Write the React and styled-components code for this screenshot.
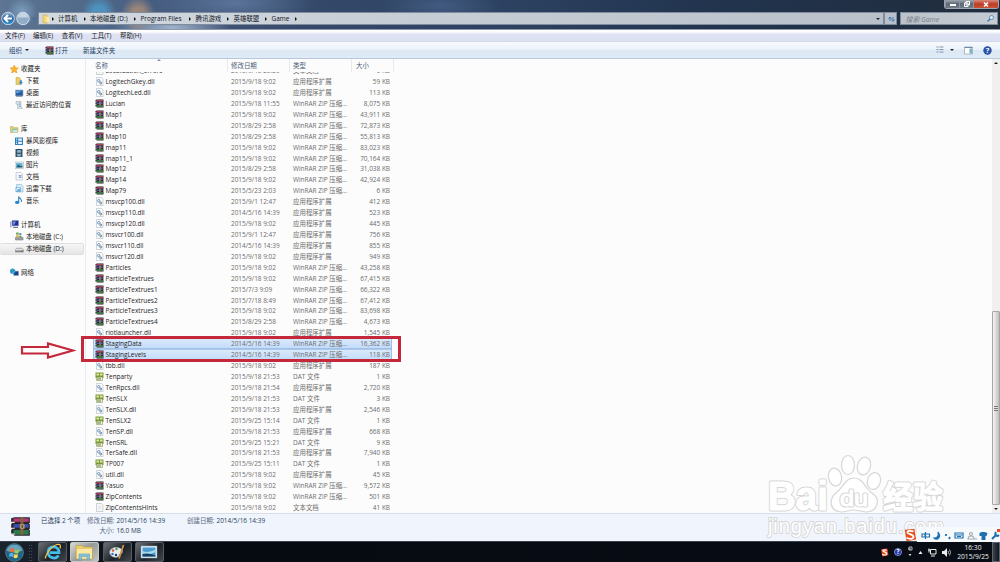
import React from "react"
import styled, { createGlobalStyle, css } from "styled-components"

const GlobalStyle = createGlobalStyle`
  * {
    box-sizing: border-box;
  }
  body {
    margin: 0;
    overflow: hidden;
    font-family: "Open Sans", "Noto Sans CJK SC", sans-serif;
    font-size: 6.45px;
    color: #222;
  }
  svg {
    display: block;
    flex: none;
  }
`

const Screen = styled.div`
  position: relative;
  width: 1000px;
  height: 562px;
  display: flex;
  flex-direction: column;
  overflow: hidden;
  background: #fcfcfc;
  white-space: nowrap;
`

const TitleBar = styled.header`
  position: relative;
  height: 30px;
  flex: none;
  display: flex;
  align-items: flex-end;
  padding: 0 0 4px 1px;
  border-bottom: 1px solid #8d99a8;
  background:
    radial-gradient(ellipse 15px 15px at 22px 12px, #84a9cccc, transparent),
    radial-gradient(ellipse 17px 16px at 99px 12px, #4d9ccbcc 35%, transparent),
    radial-gradient(ellipse 17px 18px at 138px 14px, #ae8d78cc 35%, transparent),
    radial-gradient(ellipse 60px 14px at 172px 28px, #b9cbe0cc, transparent),
    radial-gradient(ellipse 80px 22px at 235px 3px, #6680a8bb, transparent),
    radial-gradient(ellipse 60px 18px at 440px 6px, #4c6690aa, transparent),
    linear-gradient(90deg, #5e7693 0, #4b6486 12%, #3d5275 22%, #344969 32%, #2d4262 50%, #22344f 70%, #202c3c 100%);
`

const AddressBox = styled.div`
  height: 13px;
  width: ${p => p.$width};
  margin-left: ${p => p.$gap || "0"};
  display: flex;
  align-items: center;
  padding: 0 3px;
  border: 1px solid #7f8c9e;
  background: linear-gradient(90deg, ${p => p.$from}, ${p => p.$to});
  color: #0e131c;
`

const Crumb = styled.span`
  width: ${p => p.$width}px;
  display: flex;
  align-items: center;
  justify-content: space-between;
  padding-right: 4.5px;
`

const Triangle = styled.i`
  width: 0;
  height: 0;
  flex: none;
  border: 2px solid transparent;
  ${p =>
    p.$down
      ? css`border-top: 2.5px solid #222; border-bottom: 0;`
      : css`border-left: 2.5px solid #111; border-right: 0;`}
`

const RootTriangle = styled(Triangle)`
  margin: 0 4px 0 1px;
`

const Spacer = styled.span`
  flex: 1;
`

const SearchHint = styled.em`
  flex: 1;
  padding-left: 1.5px;
  font-size: 6.9px;
  color: #747b87;
`

const WindowButtons = styled.div`
  position: absolute;
  top: 0;
  right: 1px;
  display: flex;
  height: 9px;
  border: 1px solid #9ba4b1;
  border-top: 0;
  border-radius: 0 0 3px 3px;
  overflow: hidden;
`

const WindowButton = styled.span`
  width: ${p => (p.$close ? 25 : 14)}px;
  display: flex;
  align-items: center;
  justify-content: center;
  border-left: 1px solid #8b94a0;
  background: ${p =>
    p.$close
      ? "linear-gradient(#d98b7c, #bd3c25 50%, #cb5236)"
      : "linear-gradient(#a2a8b1, #5b6572 50%, #737e8c)"};
`

const MenuBar = styled.nav`
  height: 12px;
  flex: none;
  display: flex;
  align-items: center;
  padding-left: 5px;
  border-bottom: 1px solid #d3d9e6;
  background: linear-gradient(#ffffff 1px, #f1f3fa 3px, #dfe3f4 4px, #dbe0f2);
  color: #1b1b1b;
`

const MenuItem = styled.span`
  width: ${p => p.$width || 28.8}px;
`

const ToolBar = styled.div`
  height: 17px;
  flex: none;
  display: flex;
  align-items: center;
  padding: 0 8px 0 9px;
  border-bottom: 1px solid #b7c8dc;
  background: linear-gradient(#f8fbfe, #e9f1fa 48%, #dce7f4 52%, #dfebf7);
  color: #28425f;
`

const ToolItem = styled.span`
  display: flex;
  align-items: center;
  gap: ${p => p.$gap || 2}px;
  width: ${p => p.$width}px;
`

const Content = styled.div`
  flex: 1;
  min-height: 0;
  display: flex;
`

const Sidebar = styled.aside`
  width: 86px;
  flex: none;
  padding-top: 4px;
  border-right: 1px solid #e4edf6;
`

const Group = styled.div`
  margin-bottom: 12px;
`

const TreeItem = styled.div`
  height: 11.97px;
  display: flex;
  align-items: center;
  gap: 2.5px;
  width: 84px;
  padding-left: ${p => (p.$root ? 10 : 15)}px;
  border: 1px solid transparent;
  border-left: 0;
  color: #161616;
  ${p =>
    p.$active &&
    css`
      border-color: #dedede;
      border-radius: 2px;
      background: linear-gradient(#f6f6f6, #e5e5e5);
    `}
`

const FileList = styled.main`
  flex: 1;
  display: flex;
  flex-direction: column;
  padding-left: 7px;
`

const columns = "134.5px 62px 62.5px 42px"

const HeaderRow = styled.div`
  position: relative;
  height: 13px;
  flex: none;
  width: 301px;
  display: grid;
  grid-template-columns: ${columns};
`

const HeaderCell = styled.div`
  display: flex;
  align-items: center;
  padding-left: ${p => p.$pad || 2}px;
  border-right: 1px solid #e3ebf4;
  color: #4c607a;
`

const SortMark = styled.i`
  position: absolute;
  top: 0;
  left: 64px;
  border: 2px solid transparent;
  border-top: 0;
  border-bottom: 2px solid #7c93ab;
`

const Rows = styled.div`
  flex: 1;
  min-height: 0;
  display: flex;
  flex-direction: column;
  justify-content: flex-end;
  overflow: hidden;
`

const FileRow = styled.div`
  height: 10.925px;
  flex: none;
  width: 299px;
  display: grid;
  grid-template-columns: ${columns};
  align-items: center;
  color: #6d6d6d;
  ${p =>
    p.$selected &&
    css`
      border-radius: 1px;
      background: linear-gradient(#dcebfc, #c1dbfb);
      box-shadow: inset 0 0 0 0.6px #7da6d8;
    `}
`

const FileName = styled.div`
  display: flex;
  align-items: center;
  gap: 1.5px;
  padding-left: 2px;
  color: #1c1c1c;
`

const Cell = styled.div`
  padding-left: 3.5px;
`

const SizeCell = styled.div`
  width: 38px;
  text-align: right;
`

const ScrollBar = styled.div`
  width: 8px;
  flex: none;
  display: flex;
  flex-direction: column;
  align-items: center;
  justify-content: space-between;
  background: #f0f0f0;
`

const ScrollArrow = styled.span`
  height: 8px;
  display: flex;
  align-items: center;
  transform: ${p => (p.$up ? "rotate(180deg)" : "none")};
`

const Thumb = styled.div`
  width: 8px;
  height: 194px;
  margin-top: auto;
  display: flex;
  align-items: center;
  justify-content: center;
  border: 1px solid #a5a5a5;
  border-radius: 1px;
  background: linear-gradient(90deg, #f5f5f5, #dedede 45%, #bdbdbd);
`

const Grip = styled.i`
  width: 4px;
  height: 5px;
  background: repeating-linear-gradient(#777 0 1px, #e0e0e0 1px 2px);
`

const Details = styled.footer`
  height: 28px;
  flex: none;
  display: flex;
  padding: 2px 0 0 10px;
  border-top: 1px solid #d5dfeb;
  background: #f0f4fc;
  color: #2a3f5a;
  line-height: 10px;
`

const DetailColumn = styled.div`
  width: ${p => p.$width}px;
`

const DetailLine = styled.div`
  display: grid;
  grid-template-columns: 27px auto;
  gap: 2.5px;
`

const Label = styled.span`
  text-align: right;
  color: #59697f;
`

const TaskBar = styled.div`
  height: 21px;
  flex: none;
  display: flex;
  align-items: stretch;
  border-top: 1px solid #3a434d;
  background: linear-gradient(90deg, #1b232c, #060a11 17%, #080d15);
  color: #f2f2f2;
`

const StartButton = styled.div`
  width: 28px;
  display: flex;
  align-items: center;
  justify-content: center;
`

const Dots = styled.i`
  width: 5px;
  height: 17px;
  margin: 2px 5px 0 0;
  background: radial-gradient(circle, #56606b 0.6px, transparent 0.8px) 0 0 / 2.5px 3px;
`

const TaskButton = styled.div`
  width: 29px;
  margin-right: 3.3px;
  display: flex;
  align-items: center;
  justify-content: center;
  border: 1px solid ${p => (p.$active ? "#c4c7c2" : "#555b61")};
  border-radius: 2px;
  background: ${p =>
    p.$active
      ? "linear-gradient(135deg, #d9dad4, #96999a 50%, #c4c5bf)"
      : "linear-gradient(135deg, #6b7075, #1d2228 55%, #41474e)"};
`

const Tray = styled.div`
  display: flex;
  align-items: center;
  gap: 5px;
  padding-right: 2px;
`

const Clock = styled.div`
  width: 34px;
  text-align: center;
  line-height: 9px;
  font-size: 6.7px;
`

const ShowDesktop = styled.div`
  width: 8px;
  border: 1px solid #5c646d;
  background: linear-gradient(90deg, #39414a, #12171e);
`

const RedBox = styled.div`
  position: absolute;
  left: 81px;
  top: 336px;
  width: 320px;
  height: 26px;
  border: 3px solid #c4283a;
`

const Arrow = styled.svg`
  position: absolute;
  left: 20px;
  top: 341px;
`

const Watermark = styled.svg`
  position: absolute;
  left: 750px;
  top: 450px;
`

const ImeBar = styled.div`
  position: absolute;
  left: 903px;
  top: 527px;
  width: 97px;
  height: 15px;
  display: flex;
  align-items: center;
  gap: 4px;
  background: linear-gradient(90deg, transparent 14px, #f7fafd 14px);
`

function RarIcon({ size = 9 }) {
  return (
    <svg width={size} height={size} viewBox="0 0 18 18">
      <path d="M1 2l3-1h13v5l-1 .5 1 .5v4l-1 .5 1 .5v5H4l-3-2v-3l1-1-1-1V7l1-1-1-1z" fill="#29252c" />
      <path d="M3 2h13v3H3z" fill="#b03a72" />
      <path d="M3 7h13v3H3z" fill="#3c4fae" />
      <path d="M3 12h13v4H3z" fill="#2a7a4c" />
      <path d="M1 5.5h3M1 10.5h3M1 15.5h3" stroke="#e5e2dc" />
      <path d="M9 1h2.5v15H9z" fill="#84623b" />
      <path d="M8.5 7h4v4h-4z" fill="#b09a66" />
      <path d="M10 8h1v2h-1z" fill="#3c3022" />
    </svg>
  )
}

function DllIcon() {
  return (
    <svg width="9" height="9" viewBox="0 0 18 18">
      <path d="M3 1h10l3 3v13H3z" fill="#fbfdff" stroke="#a3adb6" />
      <circle cx="7.5" cy="7.5" r="2.5" fill="none" stroke="#6b91b3" strokeWidth="2" />
      <circle cx="11.5" cy="12" r="2" fill="none" stroke="#6287a9" strokeWidth="2" />
    </svg>
  )
}

function DatIcon() {
  return (
    <svg width="9" height="9" viewBox="0 0 18 18">
      <path d="M1 1h16v11H1z" fill="#7a9c35" />
      <path d="M3 3h5v4H3zM10 3h5v4h-5z" fill="#dce7a9" />
      <path d="M3 10h12v7H3z" fill="#edf0dc" stroke="#76863f" />
      <path d="M6 11v5M10 11v5" stroke="#68823d" strokeWidth="2" />
    </svg>
  )
}

function TextIcon() {
  return (
    <svg width="9" height="9" viewBox="0 0 18 18">
      <path d="M3 1h10l3 3v13H3z" fill="#f7f8f8" stroke="#a3a9af" />
      <path d="M6 6h7M6 9h7M6 12h7" stroke="#cbd1d7" />
    </svg>
  )
}

const fileIcons = { zip: RarIcon, dll: DllIcon, dat: DatIcon, txt: TextIcon }
const fileTypes = {
  zip: "WinRAR ZIP 压缩...",
  dll: "应用程序扩展",
  dat: "DAT 文件",
  txt: "文本文档",
}

// Small drawings of the navigation tree, all on a 16 unit grid
const treeDrawings = {
  star: <path d="M8 0l2.2 5.2 5.6.5-4.2 3.8 1.3 5.7L8 12.2l-4.9 3 1.3-5.7L.2 5.7l5.6-.5z" fill="#ffb52b" stroke="#dd8b1a" />,
  download: (
    <>
      <path d="M2 1h6l2 2v12H2z" fill="#f0cf69" stroke="#c29d3a" />
      <path d="M9 6h4v4h2l-4 5-4-5h2z" fill="#3e8cc9" />
    </>
  ),
  desktop: (
    <>
      <path d="M1 2h14v11H1z" fill="#235b9e" stroke="#8ba3bd" />
      <path d="M2 3h12L6 8H2z" fill="#5d9bd1" />
      <path d="M2 14h12" stroke="#52677d" />
    </>
  ),
  recent: (
    <>
      <path d="M2 1h9v9l3 5H5V6H2z" fill="#e2eaf0" stroke="#8b9eae" />
      <path d="M7 4h3M7 7h3M7 10h4" stroke="#6d92b3" strokeWidth="1.5" />
    </>
  ),
  library: (
    <>
      <path d="M1 3h5l2 2h7v9H1z" fill="#e8cf7d" stroke="#b49c4b" />
      <path d="M4 7h9v6H4z" fill="#77bfa0" />
      <path d="M5 9h9v5H5z" fill="#c4e5ea" />
    </>
  ),
  storm: (
    <>
      <path d="M0 1h15v14H0z" fill="#2b7dc0" />
      <path d="M2 3h2v2H2zM2 7h2v2H2zM2 11h2v2H2zM6 3h7v4H6zM6 9h7v4H6z" fill="#e3f4ff" />
    </>
  ),
  video: (
    <>
      <path d="M1 0h13v16H1z" fill="#283e50" />
      <path d="M4 2h7v5H4zM4 9h7v5H4z" fill="#82b7d6" />
      <path d="M2.5 1v14M12.5 1v14" stroke="#c4cfd8" strokeDasharray="1 2" />
    </>
  ),
  image: (
    <>
      <path d="M0 2h16v12H0z" fill="#f4f8fb" stroke="#94a9b7" />
      <path d="M2 4h12v8H2z" fill="#61afd2" />
      <path d="M2 12l4-5 5 3 3-1v3z" fill="#285d6e" />
    </>
  ),
  document: (
    <>
      <path d="M2 1h9l3 3v11H2z" fill="#f7faff" stroke="#9aabc0" />
      <path d="M7 7h5M7 10h5" stroke="#5b85b3" strokeWidth="2" />
    </>
  ),
  thunder: (
    <>
      <path d="M3 1h9l3 3v11H3z" fill="#d7edfb" stroke="#71a7ce" />
      <path d="M1 6h10v9H1z" fill="#71afdb" />
      <path d="M3 12c0-5 4-4 6-4" fill="none" stroke="#fff" strokeWidth="2" />
    </>
  ),
  music: (
    <>
      <ellipse cx="4" cy="12" rx="4" ry="3" fill="#2787ca" />
      <path d="M7 12V1c1 4 7 4 5 10" fill="none" stroke="#2577b5" strokeWidth="2" />
    </>
  ),
  computer: (
    <>
      <path d="M4 1h12v10H4z" fill="#1d2e9f" stroke="#8290b7" />
      <path d="M6 3h5l-3 6H6z" fill="#8097df" />
      <path d="M0 3h3v11H0z" fill="#a8b2bf" />
      <path d="M6 14h9" stroke="#657082" strokeWidth="2" />
    </>
  ),
  system: (
    <>
      <path d="M1 10h14v5H1z" fill="#9ba4a7" stroke="#626c70" />
      <path d="M2 1h5v4H2z" fill="#6cab4d" />
      <path d="M8 2h4v4H8z" fill="#548fc0" />
      <path d="M2 6h5v4H2z" fill="#e0b44a" />
      <path d="M8 7h4v3H8z" fill="#70a35a" />
    </>
  ),
  disk: (
    <>
      <path d="M3 8h10l3 3v4H0v-4z" fill="#e3e5e7" stroke="#777" />
      <path d="M1 12h14v3H1z" fill="#666" />
      <path d="M2 13h10" stroke="#f0f0f0" />
    </>
  ),
  network: (
    <>
      <path d="M7 6h9v8H7z" fill="#183e91" stroke="#7995b8" />
      <circle cx="5" cy="6" r="5" fill="#2894cd" />
      <path d="M1 7c3-1 3-3 5-5M4 10l5-4" stroke="#8ed5cf" />
    </>
  ),
}

function TreeIcon({ name }) {
  return (
    <svg width="8.5" height="8.5" viewBox="0 0 16 16">
      {treeDrawings[name]}
    </svg>
  )
}

const tree = [
  [["star", "收藏夹"], ["download", "下载"], ["desktop", "桌面"], ["recent", "最近访问的位置"]],
  [
    ["library", "库"],
    ["storm", "暴风影视库"],
    ["video", "视频"],
    ["image", "图片"],
    ["document", "文档"],
    ["thunder", "迅雷下载"],
    ["music", "音乐"],
  ],
  [["computer", "计算机"], ["system", "本地磁盘 (C:)"], ["disk", "本地磁盘 (D:)"]],
  [["network", "网络"]],
]

const files = [
  ["Localization_errors", "2015/9/18 20:20", "txt", "6"],
  ["LogitechGkey.dll", "2015/9/18 9:02", "dll", "59"],
  ["LogitechLed.dll", "2015/9/18 9:02", "dll", "113"],
  ["Lucian", "2015/9/18 11:55", "zip", "8,075"],
  ["Map1", "2015/9/18 9:02", "zip", "43,911"],
  ["Map8", "2015/8/29 2:58", "zip", "72,873"],
  ["Map10", "2015/8/29 2:58", "zip", "55,813"],
  ["map11", "2015/9/18 9:02", "zip", "83,023"],
  ["map11_1", "2015/9/18 9:02", "zip", "70,164"],
  ["Map12", "2015/8/29 2:58", "zip", "31,038"],
  ["Map14", "2015/9/18 9:02", "zip", "42,924"],
  ["Map79", "2015/5/23 2:03", "zip", "6"],
  ["msvcp100.dll", "2015/9/1 12:47", "dll", "412"],
  ["msvcp110.dll", "2014/5/16 14:39", "dll", "523"],
  ["msvcp120.dll", "2015/9/18 9:02", "dll", "445"],
  ["msvcr100.dll", "2015/9/1 12:47", "dll", "756"],
  ["msvcr110.dll", "2014/5/16 14:39", "dll", "855"],
  ["msvcr120.dll", "2015/9/18 9:02", "dll", "949"],
  ["Particles", "2015/9/18 9:02", "zip", "43,258"],
  ["ParticleTextrues", "2015/9/18 9:02", "zip", "67,415"],
  ["ParticleTextrues1", "2015/7/3 9:09", "zip", "66,322"],
  ["ParticleTextrues2", "2015/7/18 8:49", "zip", "67,412"],
  ["ParticleTextrues3", "2015/9/18 9:02", "zip", "83,698"],
  ["ParticleTextrues4", "2015/8/29 2:58", "zip", "4,673"],
  ["riotlauncher.dll", "2015/9/18 9:02", "dll", "1,545"],
  ["StagingData", "2014/5/16 14:39", "zip", "16,362", true],
  ["StagingLevels", "2014/5/16 14:39", "zip", "118", true],
  ["tbb.dll", "2015/9/18 9:02", "dll", "187"],
  ["Tenparty", "2015/9/18 21:53", "dat", "1"],
  ["TenRpcs.dll", "2015/9/18 21:54", "dll", "2,720"],
  ["TenSLX", "2015/9/18 21:53", "dat", "3"],
  ["TenSLX.dll", "2015/9/18 21:53", "dll", "2,546"],
  ["TenSLX2", "2015/9/25 15:14", "dat", "1"],
  ["TenSP.dll", "2015/9/18 21:53", "dll", "668"],
  ["TenSRL", "2015/9/25 15:21", "dat", "9"],
  ["TerSafe.dll", "2015/9/18 21:53", "dll", "7,940"],
  ["TP007", "2015/9/25 15:11", "dat", "1"],
  ["util.dll", "2015/9/18 9:02", "dll", "45"],
  ["Yasuo", "2015/9/18 9:02", "zip", "9,572"],
  ["ZipContents", "2015/9/18 9:02", "zip", "501"],
  ["ZipContentsHints", "2015/9/18 9:02", "txt", "41"],
]

const crumbs = [
  ["计算机", 32],
  ["本地磁盘 (D:)", 50.5],
  ["Program Files", 55],
  ["腾讯游戏", 38],
  ["英雄联盟", 38],
  ["Game", 30],
]

function NavButtons() {
  return (
    <svg width="37" height="16" viewBox="0 0 37 16">
      <defs>
        <linearGradient id="back" x2="0" y2="1">
          <stop offset="0" stopColor="#9cbdd8" />
          <stop offset=".5" stopColor="#235e9e" />
          <stop offset="1" stopColor="#3a9ed5" />
        </linearGradient>
      </defs>
      <circle cx="7" cy="9.5" r="6.3" fill="url(#back)" stroke="#c5d5e4" />
      <path d="M11 9.5H4M7 6L3.5 9.5 7 13" fill="none" stroke="#fff" strokeWidth="2" />
      <circle cx="22" cy="9.5" r="6.2" fill="#91adc6" stroke="#d3dee8" />
      <path d="M17 8.5a5 5 0 0 1 10 0z" fill="#c5d5e2" />
      <path d="M30.5 8.5l1.8 2 1.8-2" fill="none" stroke="#2f6796" />
    </svg>
  )
}

function Explorer() {
  return (
    <>
      <TitleBar>
        <NavButtons />
        <AddressBox $width="846px" $from="#d2d8df" $to="#bac0c9">
          <svg width="9" height="10" viewBox="0 0 16 16">
            <path d="M2 1h6l2 2v12H2z" fill="#f6d875" stroke="#c9a344" />
            <path d="M8 4h5v10H8z" fill="#ffecaa" />
          </svg>
          <RootTriangle />
          {crumbs.map(([name, width]) => (
            <Crumb key={name} $width={width}>
              <span>{name}</span>
              <Triangle />
            </Crumb>
          ))}
          <Spacer />
          <Triangle $down />
        </AddressBox>
        <AddressBox $width="13px" $from="#bcc2cb" $to="#bac0c9">
          <svg width="7" height="8" viewBox="0 0 14 16">
            <path d="M4 12V5M1 8l3-4 3 4M10 4v8M7 9l3 4 3-4" fill="none" stroke="#2672ae" strokeWidth="1.6" />
          </svg>
        </AddressBox>
        <AddressBox $width="98px" $gap="3px" $from="#bcc2ca" $to="#c5cbd2">
          <SearchHint>搜索 Game</SearchHint>
          <svg width="7" height="7" viewBox="0 0 14 14">
            <circle cx="9" cy="5" r="4" fill="#e3eef6" stroke="#3a78ad" strokeWidth="1.5" />
            <path d="M6 8l-5 5" stroke="#3a78ad" strokeWidth="2.5" />
          </svg>
        </AddressBox>
        <WindowButtons>
          <WindowButton>
            <svg width="6" height="3"><path d="M0 1h6v2H0z" fill="#fff" /></svg>
          </WindowButton>
          <WindowButton>
            <svg width="6" height="6"><path d="M2 .5h3.5V4H2zM.5 2H4v3.5H.5z" fill="none" stroke="#fff" /></svg>
          </WindowButton>
          <WindowButton $close>
            <svg width="6" height="5"><path d="M1 .5l4 4M5 .5l-4 4" stroke="#fff" strokeWidth="1.5" /></svg>
          </WindowButton>
        </WindowButtons>
      </TitleBar>
      <MenuBar>
        <MenuItem $width={28}>文件(F)</MenuItem>
        <MenuItem>编辑(E)</MenuItem>
        <MenuItem $width={29.5}>查看(V)</MenuItem>
        <MenuItem>工具(T)</MenuItem>
        <MenuItem>帮助(H)</MenuItem>
      </MenuBar>
      <ToolBar>
        <ToolItem $width={36} $gap={3.5}>组织 <Triangle $down /></ToolItem>
        <ToolItem $width={38} $gap={1}><RarIcon size={9} />打开</ToolItem>
        <ToolItem $width={40}>新建文件夹</ToolItem>
        <Spacer />
        <ToolItem $width={28} $gap={6}>
          <svg width="8" height="8" viewBox="0 0 16 16">
            <path d="M1 2h4M1 7h4M1 12h4M7 2h8M7 7h8M7 12h8" stroke="#8397ad" strokeWidth="2" />
          </svg>
          <Triangle $down />
        </ToolItem>
        <ToolItem $width={19}>
          <svg width="9" height="9" viewBox="0 0 18 18">
            <path d="M1 2h16v14H1z" fill="#fff" stroke="#6c8296" />
            <path d="M1 2h16v2H1z" fill="#6c8ba6" />
            <path d="M11 5h5v10h-5z" fill="#72b5bf" />
          </svg>
        </ToolItem>
        <ToolItem $width={9}>
          <svg width="9" height="9" viewBox="0 0 9 9">
            <circle cx="4.5" cy="4.5" r="4.2" fill="#2653a8" />
            <text x="4.5" y="7.2" textAnchor="middle" fontSize="7.5" fontWeight="700" fill="#fff">?</text>
          </svg>
        </ToolItem>
      </ToolBar>
    </>
  )
}

function Files() {
  return (
    <FileList>
      <HeaderRow>
        <HeaderCell>名称</HeaderCell>
        <HeaderCell $pad={3.5}>修改日期</HeaderCell>
        <HeaderCell $pad={3.5}>类型</HeaderCell>
        <HeaderCell $pad={4}>大小</HeaderCell>
        <SortMark />
      </HeaderRow>
      <Rows>
        {files.map(([name, date, type, size, selected]) => {
          const Icon = fileIcons[type]
          return (
            <FileRow key={name} $selected={selected}>
              <FileName><Icon />{name}</FileName>
              <Cell>{date}</Cell>
              <Cell>{fileTypes[type]}</Cell>
              <SizeCell>{size} KB</SizeCell>
            </FileRow>
          )
        })}
      </Rows>
    </FileList>
  )
}

// White letters with a thin grey rim: a wide grey stroke below a narrow white one
function RimText({ children, ...rest }) {
  const shared = {
    fontFamily: "Liberation Sans, Noto Sans CJK SC, sans-serif",
    lengthAdjust: "spacingAndGlyphs",
    paintOrder: "stroke",
    fill: "#fff",
    strokeLinejoin: "round",
    ...rest,
  }
  return (
    <>
      <text {...shared} stroke="#d6d6d6" strokeWidth="3">{children}</text>
      <text {...shared} stroke="#fff" strokeWidth="1" aria-hidden="true">{children}</text>
    </>
  )
}

function BaiduMark() {
  return (
    <Watermark width="200" height="92" viewBox="0 0 200 92">
      <g fill="#fff" stroke="#d6d6d6" strokeWidth="1.2">
        <ellipse cx="85" cy="27" rx="6.5" ry="9" transform="rotate(-12 85 27)" />
        <ellipse cx="98" cy="15" rx="6.5" ry="9.5" />
        <ellipse cx="114" cy="16" rx="6.5" ry="9" transform="rotate(15 114 16)" />
        <ellipse cx="124" cy="31" rx="6.5" ry="8.5" transform="rotate(15 124 31)" />
        <path d="M104 28c9 0 11 10 18 15 9 6 6 18-5 19-5 0-8-2-13-2s-8 2-13 2c-11-1-13-12-5-19 8-6 9-15 18-15z" />
      </g>
      <RimText x="18" y="60" fontSize="40" fontWeight="700" textLength="60">Bai</RimText>
      <RimText x="90" y="56" fontSize="22" textLength="28">du</RimText>
      <RimText x="133" y="58" fontSize="31" fontWeight="700" textLength="60">经验</RimText>
      <text
        x="18"
        y="83"
        fontFamily="Liberation Sans, sans-serif"
        fontSize="20"
        textLength="176"
        paintOrder="stroke"
        fill="#fff"
        stroke="#d6d6d6"
        strokeWidth="1.8"
      >
        jingyan.baidu.com
      </text>
    </Watermark>
  )
}

function SogouIcon({ size }) {
  return (
    <svg width={size} height={size} viewBox="0 0 16 16">
      <path d="M2 2l11-1 2 12-11 2z" fill="#e8501f" />
      <path d="M12 4c-3-1-7-1-7 1s7 2 7 5-5 3-8 1" fill="none" stroke="#fff" strokeWidth="2" />
    </svg>
  )
}

function Ime() {
  return (
    <ImeBar>
      <SogouIcon size={14} />
      <svg width="80" height="12" viewBox="0 0 80 12" fill="none" stroke="#1e70ae" strokeWidth="1.2">
        <path d="M1 5h3v3H1zM4.5 3v7M4.5 5h4v3h-4" />
        <path d="M17 3c1 4-1 6-4 6 3 3 8-1 4-6z" fill="#1e70ae" />
        <path d="M25 5v2M29 8l-1 2" strokeWidth="1.8" />
        <path d="M34 4h8v5h-8zM35 6h6M36 7.5h4" />
        <g stroke="#a4abb2"><circle cx="50" cy="5" r="1.5" /><path d="M47 10c0-4 6-4 6 0zM53 10h3" /></g>
        <path d="M58.5 4l2-1h3l3 1-1 3h-1v4h-4V7h-2z" fill="#1e70ae" stroke="none" />
        <path d="M71 10l4-4M75 3c-2 3 1 5 3 3" strokeWidth="2" />
        <path d="M76 0h4v3h-4z" fill="#e94b22" stroke="none" />
      </svg>
    </ImeBar>
  )
}

function WindowsTaskBar() {
  return (
    <TaskBar>
      <StartButton>
        <svg width="19" height="19" viewBox="0 0 38 38">
          <circle cx="19" cy="19" r="18" fill="#256385" stroke="#6f9aae" />
          <path d="M3 15a17 17 0 0 1 32 0q-16 8-32 0z" fill="#6da4ba" />
          <path d="M10 12q4-3 8 0l-1 7q-4-3-8 0z" fill="#ef6939" />
          <path d="M20 13q4 3 8 0l-1 7q-4 3-8 0z" fill="#9fce4b" />
          <path d="M9 21q4-3 8 0l-1 7q-4-3-8 0z" fill="#54b5ed" />
          <path d="M18 22q4 3 8 0l-1 7q-4 3-8 0z" fill="#ffda55" />
        </svg>
      </StartButton>
      <Dots />
      <TaskButton>
        <svg width="18" height="18" viewBox="0 0 36 36">
          <path d="M29 25c-6 9-21 5-21-7 0-14 22-14 22 1H12" fill="none" stroke="#43bde9" strokeWidth="5.5" />
          <path d="M4 29c-5 7 5-21 22-26 7-1 8 1 6 8" fill="none" stroke="#f5c748" strokeWidth="2.5" />
        </svg>
      </TaskButton>
      <TaskButton $active>
        <svg width="19" height="18" viewBox="0 0 38 36">
          <path d="M2 5h13l2 3h18v24H2z" fill="#edcb6b" stroke="#b99843" />
          <path d="M4 12h30v19H4z" fill="#fbe9a3" />
          <path d="M8 34V22h21v12h-5v-7H13v7z" fill="#83c4df" stroke="#4d91b1" />
        </svg>
      </TaskButton>
      <TaskButton>
        <svg width="18" height="18" viewBox="0 0 36 36">
          <path d="M3 18c3-12 22-12 26-2 1 7-7 4-7 9s-17 7-19-7z" fill="#e8edf2" stroke="#8b9bae" />
          <circle cx="10" cy="15" r="2.5" fill="#da533d" />
          <circle cx="17" cy="12" r="2.5" fill="#4c9d5a" />
          <circle cx="9" cy="22" r="2.5" fill="#3a7abe" />
          <circle cx="16" cy="24" r="2.5" fill="#253f70" />
          <path d="M22 31L31 4" stroke="#d09045" strokeWidth="3.5" />
        </svg>
      </TaskButton>
      <TaskButton>
        <svg width="18" height="16" viewBox="0 0 36 32">
          <path d="M2 4h32v24H2z" fill="#e5f2f8" stroke="#8ba6b6" />
          <path d="M5 7h26v18H5z" fill="#4a9bd1" />
          <path d="M5 14q12 5 26-3v5q-15 8-26 4z" fill="#a7d9ef" />
          <path d="M5 25v-5q12-3 26 3v2z" fill="#173f64" />
        </svg>
      </TaskButton>
      <Spacer />
      <Tray>
        <SogouIcon size={9} />
        <svg width="8" height="8" viewBox="0 0 9 9">
          <circle cx="4.5" cy="4.5" r="4" fill="#2838aa" stroke="#b5c2ee" strokeWidth=".7" />
          <text x="4.5" y="7.2" textAnchor="middle" fontSize="7" fontWeight="700" fill="#fff">?</text>
        </svg>
        <svg width="6" height="12" viewBox="0 0 6 12">
          <path d="M2 1h3v3H2zM1 3h3" fill="none" stroke="#ddd" strokeWidth=".8" />
          <path d="M1.5 8h3L3 10z" fill="#ddd" />
        </svg>
        <svg width="5" height="5"><path d="M.5 4h4l-2-3z" fill="#eee" /></svg>
        <svg width="9" height="9" viewBox="0 0 9 9">
          <path d="M2.5 1.5H8V6H2.5zM3 8h4M1 .5v4M0 2h2.5" fill="none" stroke="#eee" />
        </svg>
        <svg width="9" height="9" viewBox="0 0 9 9">
          <path d="M0 3h2l3-3v9L2 6H0z" fill="#eee" />
          <path d="M6 3q1 1.5 0 3M7.5 1.5q2 3 0 6" fill="none" stroke="#ddd" strokeWidth=".8" />
        </svg>
        <Clock>
          <div>16:30</div>
          <div>2015/9/25</div>
        </Clock>
      </Tray>
      <ShowDesktop />
    </TaskBar>
  )
}

const App = () => {
  return (
    <Screen>
      <GlobalStyle />
      <Explorer />
      <Content>
        <Sidebar>
          {tree.map(group => (
            <Group key={group[0][0]}>
              {group.map(([icon, label], i) => (
                <TreeItem key={icon} $root={i === 0} $active={icon === "disk"}>
                  <TreeIcon name={icon} />
                  {label}
                </TreeItem>
              ))}
            </Group>
          ))}
        </Sidebar>
        <Files />
        <ScrollBar>
          <ScrollArrow $up><Triangle $down /></ScrollArrow>
          <Thumb><Grip /></Thumb>
          <ScrollArrow><Triangle $down /></ScrollArrow>
        </ScrollBar>
      </Content>
      <Details>
        <DetailColumn $width={31}><RarIcon size={21} /></DetailColumn>
        <DetailColumn $width={46}>已选择 2 个项</DetailColumn>
        <DetailColumn $width={100}>
          <DetailLine><Label>修改日期:</Label>2014/5/16 14:39</DetailLine>
          <DetailLine><Label>大小:</Label>16.0 MB</DetailLine>
        </DetailColumn>
        <DetailColumn $width={120}>
          <DetailLine><Label>创建日期:</Label>2014/5/16 14:39</DetailLine>
        </DetailColumn>
      </Details>
      <WindowsTaskBar />
      <RedBox />
      <Arrow width="56" height="19" viewBox="0 0 56 19">
        <path d="M2 6h26V2.5L53 9.5 28 16.5v-4H2z" fill="none" stroke="#c4283a" strokeWidth="2.2" />
      </Arrow>
      <BaiduMark />
      <Ime />
    </Screen>
  )
}

export default App
